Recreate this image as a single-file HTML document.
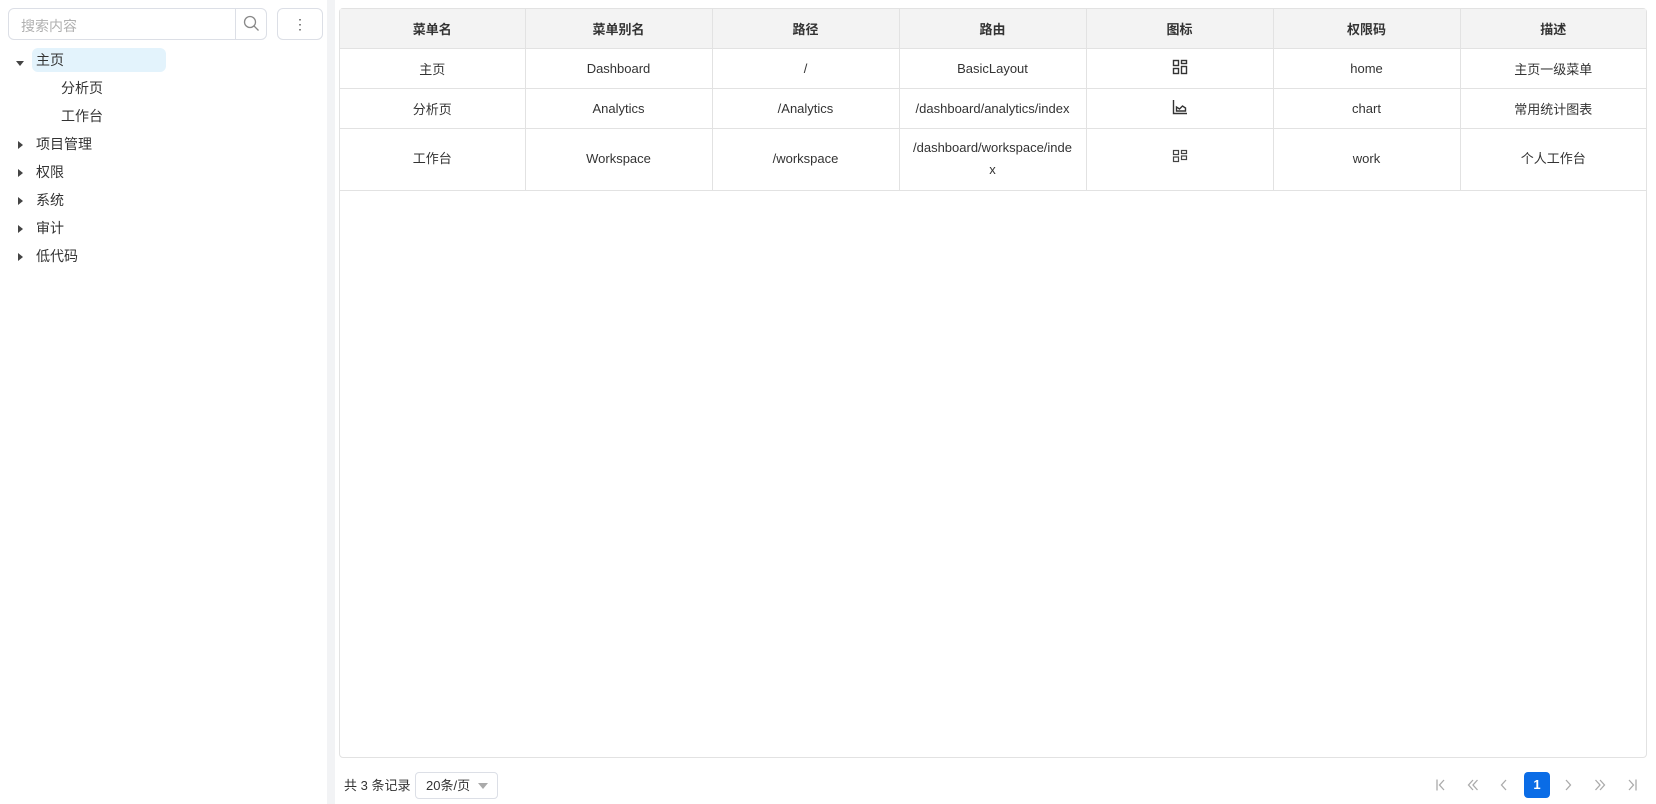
<!DOCTYPE html>
<html><head><meta charset="utf-8"><style>
*{box-sizing:border-box;margin:0;padding:0}
body{width:1656px;height:804px;background:#fff;font-family:"Liberation Sans","Noto Sans CJK SC",sans-serif;font-size:14px;color:#333;position:relative;overflow:hidden}
.side{position:absolute;left:0;top:0;width:327px;height:804px;background:#fff}
.strip{position:absolute;left:327px;top:0;width:8px;height:804px;background:#f2f3f5}
.search{position:absolute;left:8px;top:8px;width:259px;height:32px;border:1px solid #dcdfe6;border-radius:6px}
.search span{position:absolute;left:12px;top:7px;color:#b0b0b0}
.search .btn{position:absolute;right:0;top:0;width:31px;height:30px;border-left:1px solid #dcdfe6}
.more{position:absolute;left:277px;top:8px;width:46px;height:32px;border:1px solid #dcdfe6;border-radius:6px;text-align:center;line-height:30px;color:#555}
.node{position:absolute;height:24px;line-height:24px}
.hl{position:absolute;left:32px;top:48px;width:134px;height:24px;background:#e3f3fc;border-radius:6px}
.tri{position:absolute;width:0;height:0}
.tr{border-top:4px solid transparent;border-bottom:4px solid transparent;border-left:5px solid #444;left:18px}
.td{border-left:4px solid transparent;border-right:4px solid transparent;border-top:5px solid #444;left:16px;top:61px}
.main{position:absolute;left:339px;top:8px;width:1308px;height:750px;border:1px solid #e2e2e2;border-radius:4px}
table{border-collapse:collapse;width:1306px;table-layout:fixed}
th,td{border-right:1px solid #e2e2e2;border-bottom:1px solid #e2e2e2;text-align:center;font-size:13px}
th{background:#f3f3f3;height:39px;font-weight:bold;color:#333}
td{height:40px}
tr.r3 td{height:62px;line-height:22px}
th:last-child,td:last-child{border-right:none}
.foot{position:absolute;top:772px;left:344px;height:27px;line-height:27px;font-size:13px}
.sel{position:absolute;left:415px;top:772px;width:83px;height:27px;border:1px solid #dcdfe6;border-radius:4px;font-size:13px;line-height:25px;padding-left:10px}
.sel i{position:absolute;right:9px;top:10px;border-left:5px solid transparent;border-right:5px solid transparent;border-top:6px solid #aaa}
.pg{position:absolute;top:772px;height:26px;line-height:26px;width:26px;text-align:center;color:#999;font-size:15px}
.pg svg{margin-top:6px}
.cur{background:#0a6ce6;color:#fff;border-radius:4px;font-weight:bold;font-size:13px}
</style></head><body>
<div class="side">
<div class="search"><span>搜索内容</span><div class="btn"><svg width="30" height="30" viewBox="0 0 30 30"><circle cx="14" cy="13" r="5.5" fill="none" stroke="#888" stroke-width="1.3"/><path d="M18 17l4.5 4.5" stroke="#888" stroke-width="1.3"/></svg></div></div>
<div class="more">⋮</div>
<div class="hl"></div>
<div class="tri td"></div>
<div class="node" style="left:36px;top:48px">主页</div>
<div class="node" style="left:61px;top:76px">分析页</div>
<div class="node" style="left:61px;top:104px">工作台</div>
<div class="tri tr" style="top:141px"></div><div class="node" style="left:36px;top:132px">项目管理</div>
<div class="tri tr" style="top:169px"></div><div class="node" style="left:36px;top:160px">权限</div>
<div class="tri tr" style="top:197px"></div><div class="node" style="left:36px;top:188px">系统</div>
<div class="tri tr" style="top:225px"></div><div class="node" style="left:36px;top:216px">审计</div>
<div class="tri tr" style="top:253px"></div><div class="node" style="left:36px;top:244px">低代码</div>
</div>
<div class="strip"></div>
<div class="main">
<table>
<colgroup><col style="width:185px"><col style="width:187px"><col style="width:187px"><col style="width:187px"><col style="width:187px"><col style="width:187px"><col></colgroup>
<tr><th>菜单名</th><th>菜单别名</th><th>路径</th><th>路由</th><th>图标</th><th>权限码</th><th>描述</th></tr>
<tr><td>主页</td><td>Dashboard</td><td>/</td><td>BasicLayout</td><td><svg width="16" height="16" viewBox="0 0 16 16" fill="none" stroke="#333" stroke-width="1.4"><rect x="1.5" y="1.5" width="5" height="5"/><rect x="9.5" y="1.5" width="5" height="3"/><rect x="1.5" y="9.5" width="5" height="5"/><rect x="9.5" y="7.5" width="5" height="7"/></svg></td><td>home</td><td>主页一级菜单</td></tr>
<tr><td>分析页</td><td>Analytics</td><td>/Analytics</td><td>/dashboard/analytics/index</td><td><svg width="16" height="16" viewBox="0 0 16 16" fill="none" stroke="#333" stroke-width="1.4"><path d="M1.5 1v13.5H15"/><path d="M4.5 12V8l3 2 3-3 3 2v3z"/></svg></td><td>chart</td><td>常用统计图表</td></tr>
<tr class="r3"><td>工作台</td><td>Workspace</td><td>/workspace</td><td>/dashboard/workspace/inde<br>x</td><td><svg width="16" height="14" viewBox="0 0 16 14" fill="none" stroke="#444" stroke-width="1.2"><rect x="1.5" y="1.5" width="5" height="4"/><rect x="9.5" y="1.5" width="5" height="3"/><rect x="1.5" y="8" width="5" height="4.5"/><rect x="9.5" y="7" width="5" height="3.5"/></svg></td><td>work</td><td>个人工作台</td></tr>
</table>
</div>
<div class="foot">共 3 条记录</div>
<div class="sel">20条/页<i></i></div>
<div class="pg" style="left:1428px"><svg width="14" height="14" viewBox="0 0 14 14" fill="none" stroke="#aaa" stroke-width="1.3"><path d="M3 1.5v11M10 2L5.5 7 10 12"/></svg></div>
<div class="pg" style="left:1460px"><svg width="14" height="14" viewBox="0 0 14 14" fill="none" stroke="#aaa" stroke-width="1.3"><path d="M7 2L2.5 7 7 12M11.5 2L7 7l4.5 5"/></svg></div>
<div class="pg" style="left:1491px"><svg width="14" height="14" viewBox="0 0 14 14" fill="none" stroke="#aaa" stroke-width="1.3"><path d="M9 2L4.5 7 9 12"/></svg></div>
<div class="pg cur" style="left:1524px">1</div>
<div class="pg" style="left:1555px"><svg width="14" height="14" viewBox="0 0 14 14" fill="none" stroke="#aaa" stroke-width="1.3"><path d="M5 2l4.5 5L5 12"/></svg></div>
<div class="pg" style="left:1587px"><svg width="14" height="14" viewBox="0 0 14 14" fill="none" stroke="#aaa" stroke-width="1.3"><path d="M2.5 2L7 7l-4.5 5M7 2l4.5 5L7 12"/></svg></div>
<div class="pg" style="left:1619px"><svg width="14" height="14" viewBox="0 0 14 14" fill="none" stroke="#aaa" stroke-width="1.3"><path d="M4 2l4.5 5L4 12M11 1.5v11"/></svg></div>
</body></html>
